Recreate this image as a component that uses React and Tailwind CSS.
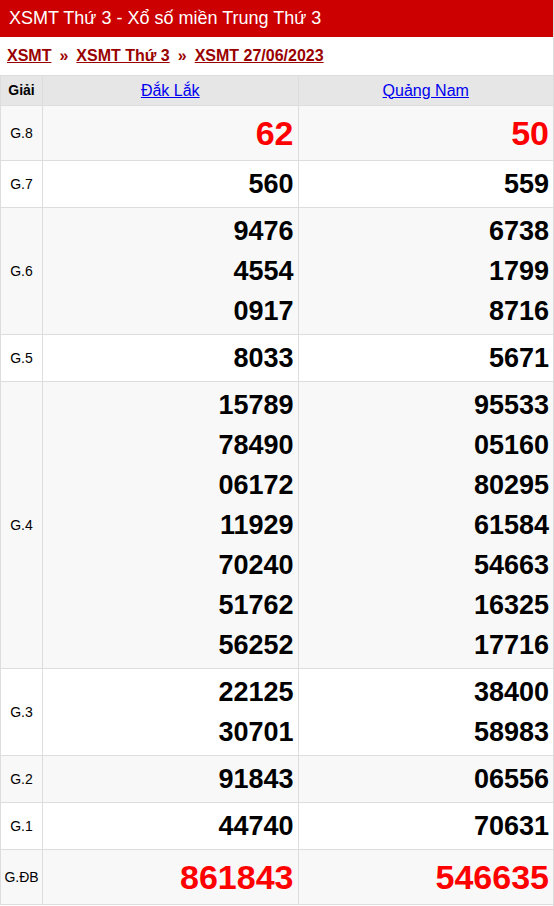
const rows = [
  { name: "G.8", a: ["62"], b: ["50"], big: true },
  { name: "G.7", a: ["560"], b: ["559"] },
  { name: "G.6", a: ["9476", "4554", "0917"], b: ["6738", "1799", "8716"] },
  { name: "G.5", a: ["8033"], b: ["5671"] },
  {
    name: "G.4",
    a: ["15789", "78490", "06172", "11929", "70240", "51762", "56252"],
    b: ["95533", "05160", "80295", "61584", "54663", "16325", "17716"],
  },
  { name: "G.3", a: ["22125", "30701"], b: ["38400", "58983"] },
  { name: "G.2", a: ["91843"], b: ["06556"] },
  { name: "G.1", a: ["44740"], b: ["70631"] },
  { name: "G.ĐB", a: ["861843"], b: ["546635"], big: true },
];

function Cell({ nums, big, last }) {
  return (
    <div
      className={
        "flex-1 flex flex-col items-end justify-center px-[4px] py-[3px] border-[#dddddd] " +
        (last ? "" : "border-r")
      }
    >
      {nums.map((n) =>
        big ? (
          <div key={n} className="text-[34px] leading-[48px] font-bold text-[#ff0000]">
            {n}
          </div>
        ) : (
          <div key={n} className="text-[27px] leading-[40px] font-bold text-black">
            {n}
          </div>
        )
      )}
    </div>
  );
}

export default function App() {
  return (
    <div
      className="w-[554px] min-h-[906px] bg-white border-r border-[#dddddd]"
      style={{ fontFamily: '"Liberation Sans", Arial, sans-serif' }}
    >
      <div className="bg-[#cc0000] h-[37px] flex items-center px-[9px]">
        <h1 className="text-white text-[18px] font-normal">XSMT Thứ 3 - Xổ số miền Trung Thứ 3</h1>
      </div>
      <div className="h-[38px] flex items-center px-[7px] text-[16px] font-bold text-[#990000]">
        <a className="underline">XSMT</a>
        <span className="mx-[8px]">»</span>
        <a className="underline">XSMT Thứ 3</a>
        <span className="mx-[8px]">»</span>
        <a className="underline">XSMT 27/06/2023</a>
      </div>
      <div className="border-l border-t border-[#dddddd]">
        <div className="flex h-[30px] bg-[#e6e6e6] border-b border-[#dddddd]">
          <div className="w-[42px] flex items-center justify-center border-r border-[#dddddd] text-[14px] font-bold text-black">
            Giải
          </div>
          <div className="flex-1 flex items-center justify-center border-r border-[#dddddd]">
            <a className="text-[16px] text-[#0000ee] underline">Đắk Lắk</a>
          </div>
          <div className="flex-1 flex items-center justify-center">
            <a className="text-[16px] text-[#0000ee] underline">Quảng Nam</a>
          </div>
        </div>
        {rows.map((r, i) => (
          <div
            key={r.name}
            className={
              "flex border-b border-[#dddddd] " + (i % 2 === 0 ? "bg-[#f8f8f8]" : "bg-white")
            }
          >
            <div className="w-[42px] flex items-center justify-center border-r border-[#dddddd] text-[14px] text-black">
              {r.name}
            </div>
            <Cell nums={r.a} big={r.big} />
            <Cell nums={r.b} big={r.big} last />
          </div>
        ))}
      </div>
    </div>
  );
}
